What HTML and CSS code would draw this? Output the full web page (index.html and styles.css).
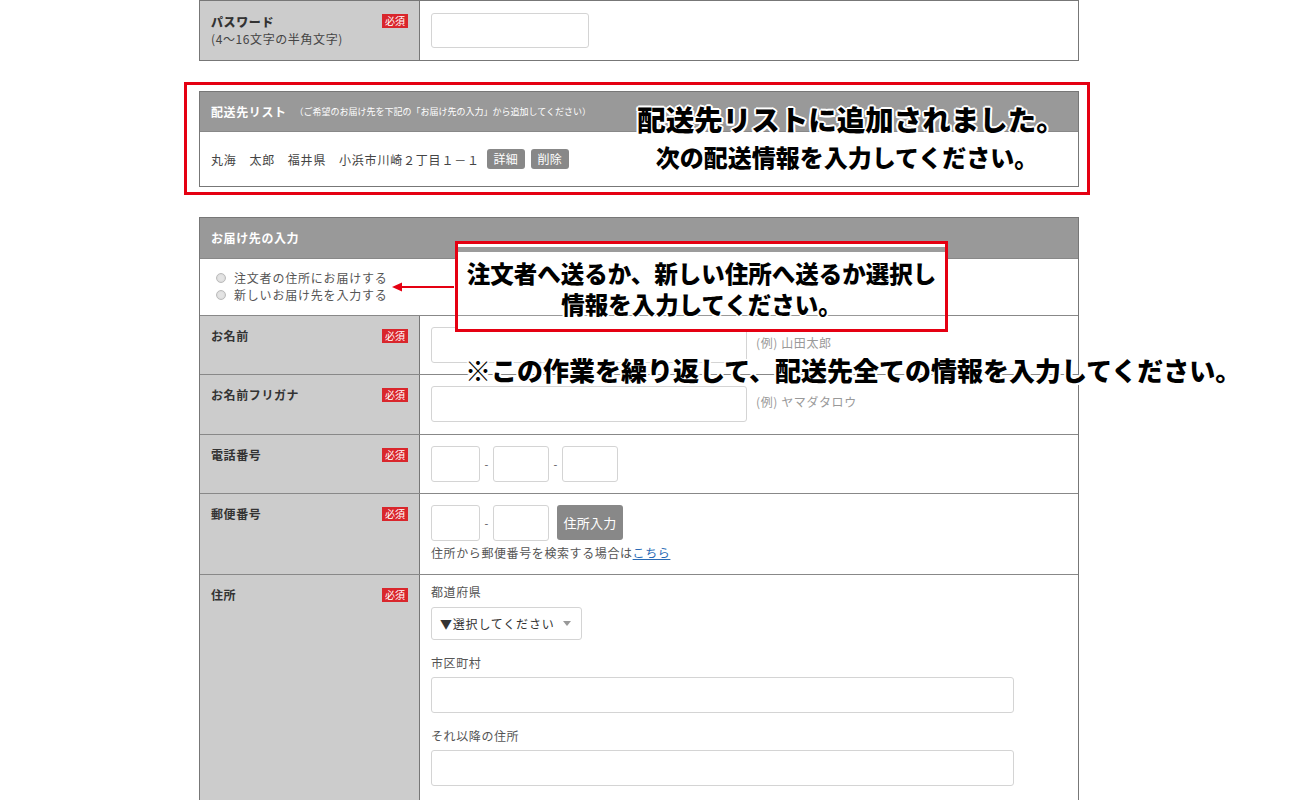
FILE: index.html
```html
<!DOCTYPE html>
<html lang="ja">
<head>
<meta charset="utf-8">
<title>お届け先の入力</title>
<link rel="stylesheet" href="styles.css">
</head>
<body>
<div class="page">

  <section class="form-table pw-table">
    <div class="row">
      <div class="label">
        <div class="label-text"><strong>パスワード</strong><span class="sub">(4〜16文字の半角文字)</span></div>
        <span class="badge">必須</span>
      </div>
      <div class="value pw-value"><span class="input w-pw pw-input"></span></div>
    </div>
  </section>

  <div class="red-frame">
    <section class="list-table">
      <div class="list-head"><strong>配送先リスト</strong><span class="list-note">（ご希望のお届け先を下記の「お届け先の入力」から追加してください）</span></div>
      <div class="list-row">
        <span class="addr">丸海　太郎　福井県　小浜市川崎２丁目１－１</span>
        <span class="btn-sm">詳細</span><span class="btn-sm">削除</span>
      </div>
    </section>
  </div>

  <section class="form-table deliver">
    <div class="table-head">お届け先の入力</div>
    <div class="radio-row">
      <label class="radio"><span class="radio-dot"></span>注文者の住所にお届けする</label>
      <label class="radio"><span class="radio-dot"></span>新しいお届け先を入力する</label>
    </div>
    <div class="row">
      <div class="label"><strong class="label-text">お名前</strong><span class="badge">必須</span></div>
      <div class="value"><span class="input w-name"></span><span class="example">(例) 山田太郎</span></div>
    </div>
    <div class="row row-kana">
      <div class="label"><strong class="label-text">お名前フリガナ</strong><span class="badge">必須</span></div>
      <div class="value"><span class="input w-name"></span><span class="example">(例) ヤマダタロウ</span></div>
    </div>
    <div class="row">
      <div class="label"><strong class="label-text">電話番号</strong><span class="badge">必須</span></div>
      <div class="value"><span class="input w-tel1"></span><span class="dash">-</span><span class="input w-tel2"></span><span class="dash">-</span><span class="input w-tel2"></span></div>
    </div>
    <div class="row">
      <div class="label"><strong class="label-text">郵便番号</strong><span class="badge">必須</span></div>
      <div class="value value-col">
        <div class="zip-line"><span class="input w-tel1"></span><span class="dash">-</span><span class="input w-tel2"></span><span class="btn-zip">住所入力</span></div>
        <div class="zip-note">住所から郵便番号を検索する場合は<a href="#" class="link">こちら</a></div>
      </div>
    </div>
    <div class="row row-addr">
      <div class="label"><strong class="label-text">住所</strong><span class="badge">必須</span></div>
      <div class="value value-col addr-value">
        <div class="field-label first">都道府県</div>
        <div class="select"><span>▼選択してください</span><span class="caret"></span></div>
        <div class="field-label">市区町村</div>
        <span class="input w-addr"></span>
        <div class="field-label">それ以降の住所</div>
        <span class="input w-addr"></span>
      </div>
    </div>
  </section>

  <div class="note note-added">
    <div class="note-l1">配送先リストに追加されました。</div>
    <div class="note-l2">次の配送情報を入力してください。</div>
  </div>

  <svg class="arrow" width="62" height="12" viewBox="0 0 62 12" aria-hidden="true">
    <line x1="8" y1="6" x2="62" y2="6" stroke="#e50012" stroke-width="2"/>
    <polygon points="0,6 10,1.5 10,10.5" fill="#e50012"/>
  </svg>

  <div class="callout">
    <div class="callout-l1">注文者へ送るか、新しい住所へ送るか選択し</div>
    <div class="callout-l2">情報を入力してください。</div>
  </div>

  <div class="note note-repeat">※この作業を繰り返して、配送先全ての情報を入力してください。</div>
</div>
</body>
</html>
```
FILE: styles.css
```css
* { box-sizing: border-box; }
html, body { margin: 0; padding: 0; background: #fff; }
body {
  font-family: "Noto Sans CJK JP", "Noto Sans", sans-serif;
  font-size: 12px;
  color: #333;
  letter-spacing: 0.6px;
  overflow: hidden;
  height: 800px;
}
.page {
  position: relative;
  width: 880px;
  margin-left: 199px;
}

/* tables */
.form-table {
  border: 1px solid #777;
  background: #fff;
}
.row {
  display: grid;
  grid-template-columns: 220px 1fr;
  border-top: 1px solid #888;
}
.pw-table .row { border-top: 0; }
.label {
  background: #ccc;
  border-right: 1px solid #777;
  padding: 12px 11px 12px 11px;
  display: flex;
  justify-content: space-between;
  align-items: flex-start;
  color: #333;
}
.label-text { line-height: 16px; font-weight: 700; }
.label-text strong { display: block; line-height: 17px; }
.label-text .sub { display: block; line-height: 17px; font-weight: 400; color: #444; }
.badge {
  background: #d9262c;
  color: #fff;
  font-size: 10px;
  line-height: 14px;
  height: 14px;
  padding: 0 3px;
  letter-spacing: 0;
  margin-top: 1px;
}
.value {
  padding: 11px;
  display: flex;
  align-items: flex-start;
}
.row-kana .value { padding-bottom: 12px; }
.pw-value { padding: 12px 11px; }
.value-col { flex-direction: column; }
.input {
  display: block;
  height: 36px;
  border: 1px solid #d4d4d4;
  border-radius: 3px;
  background: #fff;
  flex: none;
}
.pw-input { height: 35px; }
.w-pw { width: 158px; }
.w-name { width: 316px; }
.w-tel1 { width: 49px; }
.w-tel2 { width: 56px; }
.w-addr { width: 583px; }
.example {
  color: #999;
  margin-left: 9px;
  line-height: 16px;
  margin-top: 8px;
}
.dash {
  width: 13px;
  text-align: center;
  line-height: 36px;
  color: #555;
  font-size: 11px;
  letter-spacing: 0;
}
.zip-line { display: flex; align-items: flex-start; }
.btn-zip {
  margin-left: 8px;
  height: 35px;
  width: 66px;
  background: #888;
  color: #fff;
  border-radius: 3px;
  text-align: center;
  line-height: 35px;
  font-size: 13px;
  letter-spacing: 0.3px;
}
.zip-note { margin-top: 4px; margin-bottom: 2px; line-height: 16px; color: #555; }
.link { color: #2a6bb5; text-decoration: underline; }

.addr-value { padding-top: 9px; }
.field-label { line-height: 16px; margin-top: 15px; margin-bottom: 6px; color: #555; }
.field-label.first { margin-top: 0; margin-bottom: 7px; }
.select {
  width: 151px;
  height: 33px;
  border: 1px solid #d4d4d4;
  border-radius: 3px;
  display: flex;
  align-items: center;
  justify-content: space-between;
  padding: 0 10px 0 8px;
  color: #333;
  letter-spacing: 0.8px;
}
.caret {
  width: 0; height: 0;
  border-left: 4px solid transparent;
  border-right: 4px solid transparent;
  border-top: 5px solid #999;
}

/* delivery list */
.red-frame {
  margin: 21px -11px 0 -15px;
  border: 3px solid #e50012;
  padding: 6px 8px 5px 12px;
}
.list-table { border: 1px solid #777; }
.list-head {
  background: #999;
  color: #fff;
  height: 39px;
  display: flex;
  align-items: center;
  padding-left: 11px;
}
.list-head strong { font-size: 12px; letter-spacing: 0.6px; }
.list-note { font-size: 9px; letter-spacing: 0; margin-left: 8px; }
.list-row {
  border-top: 1px solid #888;
  height: 55px;
  display: flex;
  align-items: center;
  padding-left: 11px;
  color: #444;
}
.addr { margin-right: 7px; letter-spacing: 0.8px; }
.btn-sm {
  background: #888;
  color: #fff;
  border-radius: 3px;
  width: 38px;
  height: 20px;
  line-height: 20px;
  text-align: center;
  margin-right: 6px;
  letter-spacing: 0.3px;
}

/* delivery input */
.deliver { margin-top: 22px; }
.table-head {
  background: #999;
  color: #fff;
  font-weight: 700;
  height: 40px;
  line-height: 40px;
  padding-left: 11px;
}
.radio-row {
  border-top: 1px solid #888;
  padding: 10px 16px 13px;
  height: 57px;
}
.radio {
  display: flex;
  align-items: center;
  line-height: 17px;
  color: #555;
  letter-spacing: 0.8px;
}
.radio-dot {
  width: 10px; height: 10px;
  border-radius: 50%;
  border: 1px solid #bbb;
  background: radial-gradient(circle, #e4e4e4 0 40%, #d2d2d2 100%);
  margin-right: 8px;
}
.row-addr { height: 240px; }

/* annotations */
.note {
  position: absolute;
  color: #000;
  font-weight: 900;
  letter-spacing: 0;
  white-space: nowrap;
  text-shadow:
    2px 0 0 #fff, -2px 0 0 #fff, 0 2px 0 #fff, 0 -2px 0 #fff,
    1.5px 1.5px 0 #fff, -1.5px 1.5px 0 #fff, 1.5px -1.5px 0 #fff, -1.5px -1.5px 0 #fff;
}
.note-added {
  left: 418px;
  top: 102px;
  width: 460px;
  text-align: center;
}
.note-l1 { font-size: 28.5px; line-height: 34px; padding-left: 8px; }
.note-l2 { font-size: 24px; line-height: 42px; }
.note-repeat {
  left: 266px;
  top: 355px;
  font-size: 26px;
  line-height: 30px;
}
.arrow {
  position: absolute;
  left: 193px;
  top: 281px;
}
.callout {
  position: absolute;
  left: 256px;
  top: 241px;
  width: 493px;
  height: 91px;
  border: 3px solid #e50012;
  background: linear-gradient(to bottom, #fff 0 3px, #9c9c9c 3px 8px, #fff 8px 71px, #999 71px 72px, #fff 72px);
  text-align: center;
  color: #000;
  font-weight: 900;
  letter-spacing: 0;
  white-space: nowrap;
  padding-top: 14px;
  text-shadow:
    2px 0 0 #fff, -2px 0 0 #fff, 0 2px 0 #fff, 0 -2px 0 #fff;
}
.callout-l1 { font-size: 23.5px; line-height: 30px; }
.callout-l2 { font-size: 23.5px; line-height: 32px; }
```
